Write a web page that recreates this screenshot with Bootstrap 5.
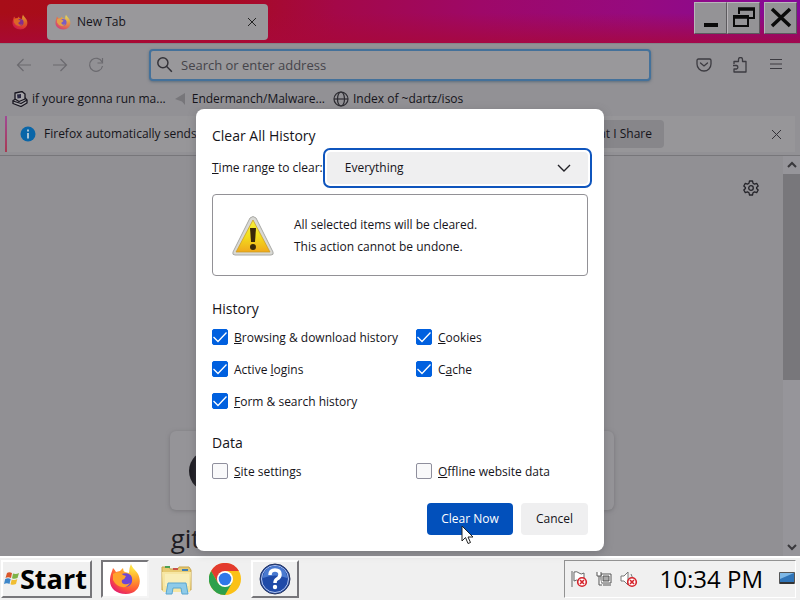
<!DOCTYPE html>
<html lang="en">
<head>
<meta charset="utf-8">
<meta name="viewport" content="width=device-width, initial-scale=1">
<title>New Tab</title>
<link href="https://cdn.jsdelivr.net/npm/bootstrap@5.3.0/dist/css/bootstrap.min.css" rel="stylesheet">
<style>
  body { font-family: "Open Sans", "Noto Sans", sans-serif; font-size: 12px; line-height: 16px; color: #15141a; background: #929195; }
  svg { display: block; flex: none; }
  button { color: inherit; font: inherit; }
  .plain { border: 0; padding: 0; background: none; }

  .titlebar { height: 43px; padding-left: 12px; background: linear-gradient(to bottom, transparent 30%, #a8083acc 100%), linear-gradient(to right, #a80d18 0, #a80a20 28%, #a40848 42%, #9e0868 60%, #960a80 80%, #840a98 100%); }
  .tab-current { width: 221px; height: 36px; background: #99989b; border-radius: 4px; margin-left: 19px; gap: 6px; }
  .winbtns { margin: 2px 3px 0 0; }
  .winbtn { width: 33px; height: 32px; background: #949396; border: 1px solid; border-color: #b9b6ba #5c5a5e #5c5a5e #b9b6ba; }
  .toolbar { height: 43px; background: #929195; color: #4b4a50; border-top: 1px solid #858488; }
  .urlbar { width: 502px; height: 32px; background: #99989b; border: 2px solid #44719a; border-radius: 4px; box-shadow: 0 1px 3px #5c6c7c; }
  .urlbar input { border: 0; background: none; outline: 0; font-size: 13px; color: #333; }
  .urlbar input::placeholder { color: #45444a; opacity: 1; }
  .bookmarks { height: 25px; }
  .bookmarks a { color: #15141a; }
  .notice { height: 45px; padding: 5px 5px 3px; border-bottom: 1px solid #77767a; }
  .notice-box { background: #979699; border-left: 2px solid; border-image: linear-gradient(#a04a98, #a83a50) 1; padding: 0 14px 0 13px; }
  .share { width: 128px; height: 28px; background: #87868a; border-radius: 4px; padding-right: 12px; margin-right: 108px; }
  .page-area { background: #919094; }
  .tiles { max-width: 444px; }
  .tile { width: 80px; height: 79px; border-radius: 6px; background: #959498; box-shadow: 0 1px 4px #77767a; }
  .tile-name { font-size: 26px; line-height: 36px; margin-top: 10px; color: #1d1c22; }
  .scroller { width: 17px; background: #96959a; }
  .thumb { height: 206px; background: #78777b; }

  .shade { inset: 0 0 44px; padding-top: 109px; }
  .dialog-box { width: 408px; height: 442px; padding: 17px 16px 16px; background: #fff; color: #15141a; border-radius: 8px; box-shadow: 0 2px 8px #55545a66; }
  .dialog-box h1, .dialog-box h2 { font-size: 14px; line-height: 20px; font-weight: 500; margin: 0; }
  .dialog-box h1 { margin-bottom: 2px; }
  .range-row { margin-right: -4px; }
  .range { width: 271px; height: 40px; border: 2px solid #0f55bd; border-radius: 7px; padding: 2px; background: #fff; }
  .range select { appearance: none; width: 100%; height: 100%; border: 0; outline: 0; border-radius: 4px; background: #efeff0; padding: 0 18px; font-size: 12px; color: #15141a; }
  .range svg { right: 18px; top: 10px; pointer-events: none; }
  .warnbox { height: 82px; border: 1px solid #929196; border-radius: 4px; padding: 2px 0 0 19px; margin: 6px 0 23px; line-height: 22px; }
  .checks { display: grid; grid-template-columns: 204px 1fr; row-gap: 16px; padding-top: 10px; }
  .checks label { display: flex; align-items: center; gap: 6px; height: 16px; white-space: nowrap; }
  .checks .form-check-input { width: 16px; height: 16px; margin: 0; border: 1px solid #8f8f9d; border-radius: 2px; background-color: #f9f9fa; }
  .checks .form-check-input:checked { background-color: #0060df; border-color: #0060df; background-size: 16px; background-image: url("data:image/svg+xml,%3Csvg xmlns='http://www.w3.org/2000/svg' viewBox='0 0 16 16'%3E%3Cpath fill='none' stroke='%23fff' stroke-width='1.300' d='M1.500 8l4.500 4.500 8.500-9'/%3E%3C/svg%3E"); }
  .checks span { padding-top: 2px; }
  .data-title { padding-top: 24px; }
  .act { height: 32px; border-radius: 4px; border: 0; }
  .act-go { width: 86px; background: #0250bb; color: #fff; }
  .act-no { width: 67px; background: #efeff0; }
  .pointer { left: 461px; top: 525px; }

  .taskbar { height: 44px; background: #f0f0f0; border-top: 2px solid #fff; padding: 2px 4px 0 1px; }
  .raised { border: 2px solid; border-color: #fff #77767a #77767a #fff; background: #f0f0f0; }
  .start { width: 91px; height: 38px; padding: 0 1px; font-size: 27px; font-weight: 700; color: #000; }
  .task { width: 48px; height: 38px; }
  .task-on { margin-left: 9px; background: #fff; border: 2px solid; border-color: #77767a #f4f4f4 #f4f4f4 #77767a; }
  .task-help { margin-left: 2px; }
  .tray { width: 232px; height: 38px; padding-left: 5px; border: 1px solid; border-color: #929292 #fff #fff #929292; color: #000; }
  .clock { font-size: 24px; line-height: 36px; }
</style>
</head>
<body class="vh-100 overflow-hidden d-flex flex-column">

<header class="titlebar d-flex align-items-start">
  <svg class="align-self-center" width="16" height="16" viewBox="0 0 32 32" opacity=".6"><use href="#fox"/></svg>
  <div class="tab-current d-flex align-items-center mt-1 px-2">
    <svg width="16" height="16" viewBox="0 0 32 32" opacity=".72"><use href="#fox"/></svg>
    <span class="flex-grow-1">New Tab</span>
    <button class="plain me-1" aria-label="Close tab"><svg width="8" height="8" viewBox="0 0 8 8" stroke="#222" fill="none"><path d="M0 0l8 8M8 0L0 8"/></svg></button>
  </div>
  <div class="winbtns d-flex ms-auto">
    <button class="winbtn p-0" aria-label="Minimize"><svg class="mx-auto" width="26" height="26" viewBox="0 0 26 26"><path fill="#0a0a0a" d="M6 18h14v4H6z"/></svg></button>
    <button class="winbtn p-0" aria-label="Restore"><svg class="mx-auto" width="26" height="26" viewBox="0 0 26 26" fill="none" stroke="#0a0a0a" stroke-width="2"><path d="M8 9V4h15v9h-5M3 11h14v10H3z"/><path stroke-width="3.500" d="M7 4h17M2 12h16"/></svg></button>
    <button class="winbtn p-0 ms-1" aria-label="Close"><svg class="mx-auto" width="26" height="26" viewBox="0 0 26 26" stroke="#0a0a0a" stroke-width="3.500"><path d="M4 4l18 17M22 4L4 21"/></svg></button>
  </div>
</header>

<nav class="toolbar d-flex align-items-center px-3">
  <div class="d-flex gap-3 me-auto">
    <button class="plain me-1" aria-label="Back"><svg width="16" height="16" viewBox="0 0 16 16" fill="none" stroke="#6b6a6f" stroke-width="1.2"><path d="M15 8H1.500M7.500 2l-6 6 6 6"/></svg></button>
    <button class="plain me-1" aria-label="Forward"><svg width="16" height="16" viewBox="0 0 16 16" fill="none" stroke="#6b6a6f" stroke-width="1.2"><path d="M1 8h13.500M8.500 2l6 6-6 6"/></svg></button>
    <button class="plain" aria-label="Reload"><svg width="16" height="16" viewBox="0 0 16 16" fill="none" stroke="#6b6a6f" stroke-width="1.2"><path d="M14 5A6.500 6.500 0 1 0 14.500 9M14.500 1v5h-5"/></svg></button>
  </div>
  <div class="urlbar d-flex align-items-center px-1">
    <svg width="18" height="18" viewBox="0 0 16 16" fill="none" stroke="#333238" stroke-width="1.300"><circle cx="7" cy="6" r="4.500"/><path d="M10.200 9.200L15 14"/></svg>
    <input class="flex-grow-1 ms-2 p-0" type="text" aria-label="Search or enter address" placeholder="Search or enter address">
  </div>
  <div class="d-flex align-items-center gap-3 ms-auto">
    <button class="plain me-1" aria-label="Save to Pocket"><svg width="16" height="16" viewBox="0 0 16 16" fill="none" stroke="#3c3b41" stroke-width="1.3" stroke-linecap="round"><path d="M2.500 2h11q1.500 0 1.500 1.500V7a7 7 0 0 1-14 0V3.500Q1 2 2.500 2zM4.500 6L8 9l3.500-3"/></svg></button>
    <button class="plain me-1" aria-label="Extensions"><svg width="16" height="16" viewBox="0 0 16 16" fill="none" stroke="#3c3b41" stroke-width="1.3" stroke-linejoin="round"><path d="M2 7V4.500h4.500V2.500a2 2 0 0 1 4 0v2H14V15H2v-3h2.500a1.800 1.800 0 0 0 0-3.500H1"/></svg></button>
    <button class="plain" aria-label="Menu"><svg width="16" height="16" viewBox="0 0 16 16" stroke="#3c3b41" stroke-width="1.2"><path d="M2 2.500h12M2 7h12M2 11.500h12"/></svg></button>
  </div>
</nav>

<nav class="bookmarks d-flex align-items-center text-nowrap gap-2 ps-2 ms-1" aria-label="Bookmarks">
  <a href="#" class="d-flex align-items-center gap-1 text-decoration-none"><svg width="16" height="16" viewBox="0 0 16 16" stroke="#17151f" stroke-width="1.300" stroke-linejoin="round"><path fill="#a5a4a8" d="M1 9.500l3-1.500 8.500-1.500L15 9v3l-6 3.500L1 12.500z"/><path d="M1 10l8 2.500L15 9" fill="none"/><path fill="#a5a4a8" d="M3 2l7-1.500L13 3v5L7 10.500 3 8z"/><path fill="#2b2943" stroke="none" d="M5 3.500l4-.5v4L5.500 7.500z"/></svg>if youre gonna run ma...</a>
  <a href="#" class="d-flex align-items-center gap-1 text-decoration-none"><svg width="14" height="14" viewBox="0 0 14 14"><path fill="#77767a" d="M11 1v12L8 9.500 1 7z"/></svg>Endermanch/Malware...</a>
  <a href="#" class="d-flex align-items-center gap-1 text-decoration-none"><svg width="16" height="16" viewBox="0 0 16 16" fill="none" stroke="#2c2b31" stroke-width="1.200"><circle cx="8" cy="8" r="7"/><ellipse cx="8" cy="8" rx="3.500" ry="7"/><path d="M1 8h14"/></svg>Index of ~dartz/isos</a>
</nav>

<div class="notice">
  <div class="notice-box h-100 d-flex align-items-center text-nowrap">
    <svg class="me-2" width="16" height="16" viewBox="0 0 16 16"><circle cx="8" cy="8" r="7.500" fill="#0a66a8"/><path fill="#a9c4d6" d="M7 3.500h2v2H7zM7 7h2v5.500H7z"/></svg>
    <span>Firefox automatically sends s</span>
    <button class="plain share text-end ms-auto">What I Share</button>
    <button class="plain" aria-label="Dismiss"><svg width="9" height="9" viewBox="0 0 9 9" stroke="#333238" fill="none"><path d="M0 0l9 9M9 0L0 9"/></svg></button>
  </div>
</div>

<main class="page-area d-flex flex-grow-1 overflow-hidden">
  <div class="flex-grow-1 d-flex flex-column">
    <button class="plain align-self-end mt-4 me-4" aria-label="Personalize new tab"><svg width="16" height="16" viewBox="0 0 16 16" fill="none" stroke="#25242a" stroke-width="1.300" stroke-linejoin="round"><path d="M6.500 1h3l.5 2.200 1.500.9 2.200-.7 1.500 2.600L13.600 7.500v1l1.600 1.500-1.500 2.600-2.200-.7-1.500.9-.5 2.200h-3L6 12.800l-1.500-.9-2.200.7L.8 10l1.600-1.500v-1L.8 6l1.500-2.600 2.200.7L6 3.200z"/><circle cx="8" cy="8" r="2.300"/></svg></button>
    <div class="tiles mt-auto d-flex justify-content-between mx-auto w-100">
      <a href="#" class="text-decoration-none text-center"><span class="tile d-flex align-items-center justify-content-center"><svg width="42" height="42" viewBox="0 0 40 40"><circle cx="20" cy="20" r="20" fill="#1d1c22"/></svg></span><span class="tile-name d-block">github</span></a>
      <a href="#" class="tile" aria-label="Top site"></a>
    </div>
  </div>
  <div class="scroller d-flex flex-column">
    <svg class="mx-auto my-1" width="10" height="10" viewBox="0 0 10 10" fill="none" stroke="#39383c" stroke-width="2"><path d="M1 7l4-4 4 4"/></svg>
    <div class="thumb"></div>
    <svg class="mx-auto mt-auto mb-1" width="10" height="10" viewBox="0 0 10 10" fill="none" stroke="#39383c" stroke-width="2"><path d="M1 3l4 4 4-4"/></svg>
  </div>
</main>

<footer class="taskbar d-flex">
  <button class="raised start d-flex align-items-center"><svg width="16" height="16" viewBox="0 0 16 16"><path fill="#d9572b" d="M3 2q2-1.500 5 0L7 7Q4 5.500 1.500 7z"/><path fill="#7fb347" d="M9 2.500q3 1 6-.5l-1.500 5q-3 1.500-5.500.3z"/><path fill="#3d86c9" d="M1.200 8Q4 6.500 6.700 8L5.500 13Q3 11.500 0 13z"/><path fill="#f0bd32" d="M7.700 8.400q3 1.200 5.600-.4L12 13q-3 1.500-5.500.3z"/></svg>Start</button>
  <button class="task task-on p-0 d-flex align-items-center justify-content-center" aria-label="Firefox"><svg width="32" height="32" viewBox="0 0 32 32">
    <defs>
      <radialGradient id="fg" cx=".8" cy=".1" r="1"><stop offset="0" stop-color="#fff04a"/><stop offset=".4" stop-color="#ffa42a"/><stop offset=".75" stop-color="#ff5a36"/><stop offset="1" stop-color="#e5206a"/></radialGradient>
      <g id="fox"><path fill="url(#fg)" d="M1 18C1 12 3 9 4 5q2 2 3 4l4-1q2-2 3-3 0 3 2 4l4 1q0-5 2-9c1 4 4 5 7 10 5 10-1 20-12 20C7 31 1 25 1 18z"/><path fill="#6f45d4" d="M10 13c3-4 12-4 13 2 1 6-3 9-7 9s-8-3-7-8z"/><path fill="#ffa22b" d="M4 11c4-3 8-2 10 1l3 1q-1 3-4 4-1 3 2 4 3 1 6-1-3 5-8 4-6-1-9-7z"/></g>
    </defs><use href="#fox"/></svg></button>
  <button class="task plain d-flex align-items-center justify-content-center ms-1" aria-label="Explorer"><svg width="34" height="32" viewBox="0 0 34 32"><path fill="#e7ca72" stroke="#c7a44b" d="M2 27V4h7l1 2h8l1-2h10l2 3v20z"/><path fill="#4ba054" d="M5 3h5v2H5z"/><path fill="#c8524a" d="M13 5h5v2h-5z"/><path fill="#3f7fb5" d="M22 6h6v2h-6z"/><path fill="#f6e6a4" d="M2 9h29l-1 20H3z"/><path fill="#f9eeb9" d="M5 11h24v12H5z"/><path fill="#8ecbe9" stroke="#5ba6cf" d="M6 31l2-11h18l2 11h-6l-1-6h-8l-1 6z"/></svg></button>
  <button class="task plain d-flex align-items-center justify-content-center" aria-label="Chrome"><svg width="32" height="32" viewBox="0 0 32 32"><circle cx="16" cy="16" r="16" fill="#fbc116"/><path fill="#e33b2e" d="M2.100 8A16 16 0 0 1 29.900 8H16L9.100 20z"/><path fill="#2da04c" d="M2.100 8A16 16 0 0 0 16 32l6.900-12-6.900 4-7-4z"/><circle cx="16" cy="16" r="8" fill="#fff"/><circle cx="16" cy="16" r="6.300" fill="#2f78e8"/></svg></button>
  <button class="raised task task-help p-0 d-flex align-items-center justify-content-center" aria-label="Help"><svg width="32" height="32" viewBox="0 0 32 32"><circle cx="16" cy="16" r="15" fill="#1f4aa8" stroke="#27345e"/><circle cx="16" cy="16" r="13.500" fill="none" stroke="#b8c8ee"/><path fill="#4a7ad0" d="M4 15a12 12 0 0 1 24 0q-12-5-24 0z"/><path fill="none" stroke="#fff" stroke-width="3.500" d="M11 12q0-5 5-5t5 4.500q0 3-3 4.500-2 1-2 4"/><circle cx="16" cy="24" r="2.200" fill="#fff"/></svg></button>
  <div class="tray ms-auto d-flex align-items-center">
    <svg width="18" height="18" viewBox="0 0 18 18" fill="#fff" stroke="#666"><path d="M2 1v16M4 2q3-1 5 1t5 0v8q-3 2-5 0t-5 0z"/><circle cx="12" cy="12" r="4.300" stroke="#d5222a" stroke-width="1.600"/><path stroke="#d5222a" stroke-width="1.600" d="M10 10l4 4M14 10l-4 4"/></svg>
    <svg class="ms-2" width="16" height="16" viewBox="0 0 16 16" fill="#fff" stroke="#555"><path d="M5 3h10v9H5z"/><path fill="#aaa" d="M7 5h6v5H7zM7 14h8"/><path d="M1 1v4h4V1M3 5v9h3"/></svg>
    <svg class="ms-2" width="18" height="18" viewBox="0 0 18 18" fill="#fff" stroke="#777"><path d="M1 6h3l4-4v13l-4-4H1zM11 4q2 3 1 6"/><circle cx="12" cy="12" r="4.300" stroke="#d5222a" stroke-width="1.600"/><path stroke="#d5222a" stroke-width="1.600" d="M10 10l4 4M14 10l-4 4"/></svg>
    <span class="clock ms-auto me-3">10:34 PM</span>
    <svg width="16" height="14" viewBox="0 0 16 14"><path fill="#2f74b8" stroke="#555" d="M.5.500h15v11H.5z"/><path fill="#7db7e6" d="M1 1h14L1 7z"/><path fill="#333" d="M1 10h14v2H1z"/></svg>
  </div>
</footer>

<div class="shade position-absolute d-flex justify-content-center align-items-start">
  <form class="dialog-box d-flex flex-column" role="dialog" aria-labelledby="dlg-title">
    <h1 id="dlg-title">Clear All History</h1>
    <div class="range-row d-flex align-items-center justify-content-between text-nowrap">
      <label for="range"><u>T</u>ime range to clear:</label>
      <div class="range position-relative">
        <select id="range"><option>Everything</option></select>
        <svg class="position-absolute" width="16" height="16" viewBox="0 0 16 16" fill="none" stroke="#222127" stroke-width="1.400"><path d="M2 5l6 6 6-6"/></svg>
      </div>
    </div>
    <div class="warnbox d-flex align-items-center">
      <svg width="42" height="40" viewBox="0 0 42 40"><defs><linearGradient id="wg" x2="0" y2="1"><stop offset="0" stop-color="#f7ef3e"/><stop offset=".5" stop-color="#f3df1c"/><stop offset="1" stop-color="#f0a91d"/></linearGradient></defs><path fill="#d9d9d4" stroke="#a9a9a5" stroke-linejoin="round" d="M18 2q3-3 6 0l17 34q1 3-2 3H3q-3 0-2-3z"/><path fill="url(#wg)" stroke="#c99a1e" stroke-width=".7" d="M21 4l17 32H4z"/><path fill="#3a2808" d="M18 12h6l-1 14h-4z"/><circle cx="21" cy="31" r="3" fill="#3a2808"/></svg>
      <div class="ms-3 ps-1">All selected items will be cleared.<br>This action cannot be undone.</div>
    </div>
    <h2>History</h2>
    <div class="checks">
      <label><input class="form-check-input" type="checkbox" checked><span><u>B</u>rowsing &amp; download history</span></label>
      <label><input class="form-check-input" type="checkbox" checked><span><u>C</u>ookies</span></label>
      <label><input class="form-check-input" type="checkbox" checked><span>Active <u>l</u>ogins</span></label>
      <label><input class="form-check-input" type="checkbox" checked><span>C<u>a</u>che</span></label>
      <label><input class="form-check-input" type="checkbox" checked><span><u>F</u>orm &amp; search history</span></label>
    </div>
    <h2 class="data-title">Data</h2>
    <div class="checks">
      <label><input class="form-check-input" type="checkbox"><span><u>S</u>ite settings</span></label>
      <label><input class="form-check-input" type="checkbox"><span><u>O</u>ffline website data</span></label>
    </div>
    <div class="d-flex justify-content-end gap-2 mt-auto">
      <button type="button" class="act act-go">Clear Now</button>
      <button type="button" class="act act-no">Cancel</button>
    </div>
  </form>
</div>
<svg class="pointer position-absolute" width="13" height="20" viewBox="0 0 13 20"><path fill="#fff" stroke="#222" d="M1 1v15l3.500-3.500L7 18.500l2.500-1L7 12h5z"/></svg>

<script src="https://cdn.jsdelivr.net/npm/bootstrap@5.3.0/dist/js/bootstrap.bundle.min.js"></script>
</body>
</html>
